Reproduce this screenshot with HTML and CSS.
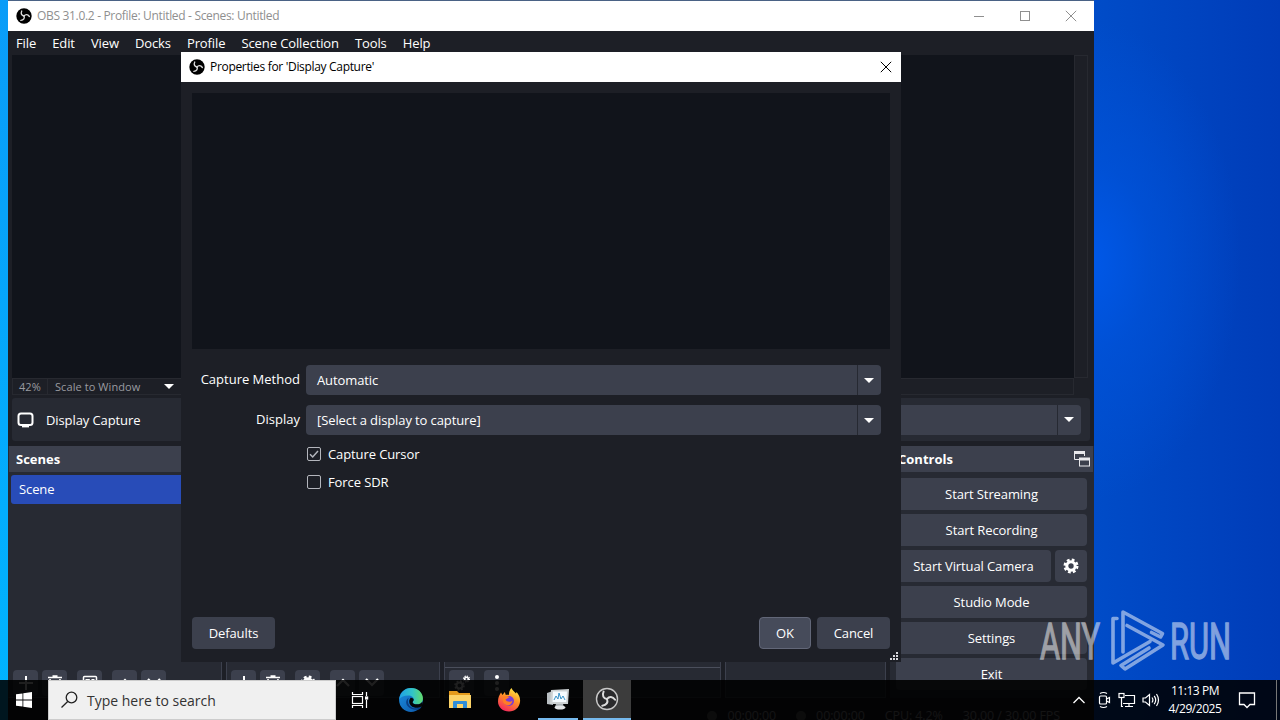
FILE: index.html
```html
<!DOCTYPE html>
<html lang="en">
<head>
    <meta charset="UTF-8">
    <meta name="viewport" content="width=device-width, initial-scale=1.0">
    <title>OBS 31.0.2</title>
    <link rel="stylesheet" href="styles.css">
</head>
<body>
    <!-- Shared icons -->
    <svg class="defs" width="0" height="0">
        <symbol id="obs" viewBox="0 0 24 24">
            <circle cx="12" cy="12" r="11.5" fill="#000"/>
            <g id="blades" fill="none" stroke="#dcdcdc" stroke-width="2" stroke-linecap="round">
                <path id="blade" d="M12 12C8.500 11.500 6.800 8.500 8.600 4.600"/>
                <use href="#blade" transform="rotate(120 12 12)"/>
                <use href="#blade" transform="rotate(240 12 12)"/>
            </g>
        </symbol>
        <symbol id="gear" viewBox="0 0 16 16">
            <circle cx="8" cy="8" r="4.200" fill="none" stroke="#fff" stroke-width="3"/>
            <circle cx="8" cy="8" r="6.200" fill="none" stroke="#fff" stroke-width="2.600" stroke-dasharray="2.700 2.170"/>
        </symbol>
        <symbol id="plus" viewBox="0 0 16 16"><path d="M8 1v14M1 8h14" stroke="#fff" stroke-width="2"/></symbol>
        <symbol id="trash" viewBox="0 0 16 16">
            <path d="M1 2.500h14M5.500 1h5M3 4l1 11h8l1-11M6 5v8M8 5v8M10 5v8" fill="none" stroke="#fff" stroke-width="1.600"/>
        </symbol>
        <symbol id="filter" viewBox="0 0 16 16">
            <rect x="1.500" y="1.500" width="13" height="12" rx="1" fill="none" stroke="#fff" stroke-width="1.500"/>
            <path d="M3.500 4h4l5 7h-9z" fill="#fff"/><path d="M9 4h3.500v4z" fill="#fff"/>
        </symbol>
        <symbol id="up" viewBox="0 0 16 16"><path d="M2 11l6-6 6 6" fill="none" stroke="#fff" stroke-width="2.200"/></symbol>
        <symbol id="down" viewBox="0 0 16 16"><path d="M2 4l6 6 6-6" fill="none" stroke="#fff" stroke-width="2.200"/></symbol>
        <symbol id="close" viewBox="0 0 12 12"><path d="M.8.8l10.400 10.400M11.200.8L.8 11.200" stroke="currentColor" stroke-width="1"/></symbol>
    </svg>

    <div class="window main-window">
        <header class="titlebar inactive">
            <svg class="app-icon"><use href="#obs"/></svg>
            <span class="title">OBS 31.0.2 - Profile: Untitled - Scenes: Untitled</span>
            <div class="window-buttons">
                <svg width="12" height="12"><path d="M1 6.500h10" stroke="currentColor"/></svg>
                <svg width="12" height="12"><rect x="1.500" y="1.500" width="9" height="9" fill="none" stroke="currentColor"/></svg>
                <svg width="12" height="12"><use href="#close"/></svg>
            </div>
        </header>
        <nav class="menubar">
            <span>File</span><span>Edit</span><span>View</span><span>Docks</span><span>Profile</span><span>Scene Collection</span><span>Tools</span><span>Help</span>
        </nav>
        <div class="preview-row">
            <div class="preview"></div>
            <div class="scroll-v"></div>
        </div>
        <div class="zoom-row">
            <span class="zoom-value">42%</span>
            <span class="zoom-mode">Scale to Window</span>
            <i class="arrow"></i>
        </div>
        <div class="source-toolbar">
            <svg width="18" height="16"><rect x="1.500" y="1.500" width="14" height="11.500" rx="2.500" fill="none" stroke="#fff" stroke-width="2"/><path d="M5 14.600h7" stroke="#fff" stroke-width="1.600"/></svg>
            <span>Display Capture</span>
            <div class="combo"><span></span><b><i class="arrow"></i></b></div>
        </div>
        <div class="docks">
            <section class="dock scenes">
                <h2>Scenes</h2>
                <div class="dock-body">
                    <div class="scene-item">Scene</div>
                </div>
                <div class="dock-tools">
                    <b><svg><use href="#plus"/></svg></b>
                    <b><svg><use href="#trash"/></svg></b>
                    <b class="gap"><svg><use href="#filter"/></svg></b>
                    <b class="gap"><svg><use href="#up"/></svg></b>
                    <b><svg><use href="#down"/></svg></b>
                </div>
            </section>
            <section class="dock sources">
                <h2>Sources</h2>
                <div class="dock-body"></div>
                <div class="dock-tools">
                    <b><svg><use href="#plus"/></svg></b>
                    <b><svg><use href="#trash"/></svg></b>
                    <b class="gap"><svg><use href="#gear"/></svg></b>
                    <b class="gap"><svg><use href="#up"/></svg></b>
                    <b><svg><use href="#down"/></svg></b>
                </div>
            </section>
            <section class="dock mixer">
                <h2>Audio Mixer</h2>
                <div class="dock-body"></div>
                <div class="dock-tools">
                    <b><svg viewBox="0 0 16 16"><g fill="none" stroke="#fff"><circle cx="5.500" cy="10.500" r="3" stroke-width="2"/><circle cx="5.500" cy="10.500" r="4.500" stroke-width="1.500" stroke-dasharray="1.800 1.730"/><circle cx="12.500" cy="4" r="1.800" stroke-width="1.600"/><circle cx="12.500" cy="4" r="3" stroke-width="1.200" stroke-dasharray="1.300 1.050"/></g></svg></b>
                    <b class="gap"><svg viewBox="0 0 16 16" fill="#fff"><circle cx="8" cy="2" r="2"/><circle cx="8" cy="8" r="2"/><circle cx="8" cy="14" r="2"/></svg></b>
                </div>
            </section>
            <section class="dock transitions">
                <h2>Scene Transitions</h2>
                <div class="dock-body"></div>
            </section>
            <section class="dock controls">
                <h2>Controls
                    <svg width="17" height="18"><g fill="none" stroke="#e8e8ec"><path d="M6 9.500H1.500v-8h10V6"/><path d="M1 2.500h11" stroke-width="3"/><rect x="6.500" y="8.500" width="10" height="7.500"/><path d="M6 9h11" stroke-width="3"/></g></svg>
                </h2>
                <div class="control-list">
                    <div class="btn">Start Streaming</div>
                    <div class="btn">Start Recording</div>
                    <div class="split">
                        <div class="btn">Start Virtual Camera</div>
                        <div class="btn gear"><svg width="16" height="16"><use href="#gear"/></svg></div>
                    </div>
                    <div class="btn">Studio Mode</div>
                    <div class="btn">Settings</div>
                    <div class="btn">Exit</div>
                </div>
            </section>
        </div>
        <div class="statusbar">
            <i></i><span class="stream">00:00:00</span><i></i><span>00:00:00</span><span>CPU: 4.2%</span><span>30.00 / 30.00 FPS</span>
        </div>
    </div>

    <div class="window dialog">
        <header class="titlebar">
            <svg class="app-icon"><use href="#obs"/></svg>
            <span class="title">Properties for 'Display Capture'</span>
            <div class="window-buttons">
                <svg width="12" height="12"><use href="#close"/></svg>
            </div>
        </header>
        <div class="dialog-body">
            <div class="source-preview"></div>
            <div class="form">
                <label>Capture Method</label>
                <div class="combo"><span>Automatic</span><b><i class="arrow"></i></b></div>
                <label>Display</label>
                <div class="combo"><span>[Select a display to capture]</span><b><i class="arrow"></i></b></div>
            </div>
            <div class="checks">
                <div class="check"><svg width="14" height="14"><rect x=".5" y=".5" width="13" height="13" rx="1.500"/><path d="M3 7.200l2.700 2.800L11 4"/></svg>Capture Cursor</div>
                <div class="check"><svg width="14" height="14"><rect x=".5" y=".5" width="13" height="13" rx="1.500"/></svg>Force SDR</div>
            </div>
            <div class="dialog-buttons">
                <div class="btn defaults">Defaults</div>
                <div class="btn ok">OK</div>
                <div class="btn cancel">Cancel</div>
            </div>
        </div>
        <svg class="grip" width="9" height="9" fill="#d8d8dc"><path d="M6 0h2v2H6zM3 3h2v2H3zM6 3h2v2H6zM0 6h2v2H0zM3 6h2v2H3zM6 6h2v2H6z"/></svg>
    </div>

    <svg class="watermark" width="200" height="70" viewBox="0 0 200 70">
        <g fill="#fff" stroke="#fff" stroke-width="1.300">
            <text x="5" y="54" textLength="60" lengthAdjust="spacingAndGlyphs">ANY</text>
            <text x="135" y="54" textLength="61" lengthAdjust="spacingAndGlyphs">RUN</text>
        </g>
        <path d="M88 47V7l39.500 21.500-2 3.500-9-4.500M82 13.500h-4V58l37-21.500M92 20.500L128 40 90 64l-4-3.500L114 43" fill="none" stroke="#fff" stroke-width="3.600" stroke-linejoin="round" stroke-linecap="round"/>
    </svg>

    <footer class="taskbar">
        <div class="start"><svg width="16" height="16" fill="#fff"><path d="M0 2.300l6.500-.9v6.200H0zM7.300 1.300L16 0v7.600H7.300zM0 8.400h6.500v6.200L0 13.700zM7.300 8.400H16V16l-8.700-1.200z"/></svg></div>
        <div class="search">
            <svg width="18" height="18" fill="none" stroke="#222" stroke-width="1.300"><circle cx="10.500" cy="6.500" r="5.300"/><path d="M6.700 10.500L.5 16.500"/></svg>
            <span>Type here to search</span>
        </div>
        <div class="task"><svg width="18" height="16" fill="none" stroke="#fff" stroke-width="1.200"><path d="M1.500 0v2.500h10V0M1.500 16v-2.500h10V16"/><rect x="1.500" y="4.500" width="10" height="7"/><path d="M15.500 0v4M15.500 8v8"/><rect x="14.600" y="5" width="2" height="2" fill="#fff"/></svg></div>
        <div class="task edge">
            <svg width="26" height="26" viewBox="0 0 24 24">
                <defs>
                    <linearGradient id="edge-top" x1="0" x2="1"><stop offset="0" stop-color="#1fa2e6"/><stop offset=".55" stop-color="#31c4c8"/><stop offset="1" stop-color="#63dc6a"/></linearGradient>
                    <linearGradient id="edge-low" x1="0" x2="1" y2="1"><stop offset="0" stop-color="#1b8fe0"/><stop offset="1" stop-color="#0c56a8"/></linearGradient>
                </defs>
                <circle cx="12" cy="12" r="11" fill="url(#edge-low)"/>
                <path d="M1.200 11C2 5 6.500 1 12 1c6.500 0 11 4.500 11 9.500 0 3.500-2.500 5.500-5.500 5.500-2.500 0-4-1-4-2 0-.6 1-1 1-2.500 0-2-2-3.700-5-3.700-4 0-7 1.500-8.300 3.200z" fill="url(#edge-top)"/>
                <path d="M10 10c-2 3-.5 8.500 4.500 9.500 3 .5 5.500-.5 7.500-1.800-.5 1-1.500 2.200-2.300 2.800-3 .9-7 .8-9.700-1.700C6.500 16 7 11.500 10 10z" fill="#0a3f86"/>
                <path d="M13.500 14c0 1 1.500 2 4 2 2.200 0 4-1 4.900-2.500.5 1.500.3 3-.5 4.200-5 3-10.900.8-11.500-3.700-.2-1.500.3-3 1.300-4 2 0 2.800 1 2.800 2 0 .8-1 1.300-1 2z" fill="#050708"/>
            </svg>
        </div>
        <div class="task">
            <svg width="22" height="20" viewBox="0 0 22 20"><path d="M0 1h8l2 2h11v5H0z" fill="#e59b1c"/><path d="M0 5h22v13H0z" fill="#fcd368"/><path d="M4 18v-6q0-1 1-1h12q1 0 1 1v6h-4v-4H8v4z" fill="#2f8dd8"/></svg>
        </div>
        <div class="task">
            <svg width="24" height="24" viewBox="0 0 24 24">
                <defs><linearGradient id="fox" x1=".8" x2=".3" y2="1"><stop offset="0" stop-color="#fff04a"/><stop offset=".45" stop-color="#ff9226"/><stop offset="1" stop-color="#f5265d"/></linearGradient></defs>
                <path d="M14.500 0c1 2.500 3 3.500 4.500 5.500l.6-1.500c2.500 3 3.900 6 3.400 10-.7 5.500-5 9.500-11 9.500S1 19.500 1 13.500C1 10 2 7.500 4 4.500L5.500 7l2.300-3 1 3c1-.2 2.200-.2 3 0 .2-2.500.7-5 2.700-7z" fill="url(#fox)"/>
                <circle cx="12" cy="13" r="5" fill="#7a3bd6"/>
                <path d="M6 9c2-1.500 5-1.500 6.500.5-2 .2-2.500 1.500-4 2 1 2.500 5 3 7 1-.5 4-3.500 5.500-6 4.500C6.500 16 5 12.500 6 9z" fill="#ff7d25"/>
            </svg>
        </div>
        <div class="task running">
            <svg width="24" height="22" viewBox="0 0 24 22"><path d="M1 5l6-2v14l-6-1z" fill="#b9bfc3"/><path d="M5 2l18-1-1 15H4z" fill="#cdd2d4"/><path d="M7 3.500h14l-.8 10.500H6.500z" fill="#f5fbff"/><path d="M8 12l2-4 2 3 1-6 2 6 2-3 2 4" fill="none" stroke="#3a93c9"/><path d="M10 16h7l1 3H9z" fill="#aab0b4"/><ellipse cx="14" cy="19.500" rx="5.500" ry="2" fill="#e2e5e7"/></svg>
        </div>
        <div class="task running active">
            <svg width="24" height="24" viewBox="0 0 24 24"><circle cx="12" cy="12" r="10.500" fill="#2a2a2c" stroke="#c8c8c8" stroke-width="1.400"/><use href="#blades"/></svg>
        </div>
        <div class="tray">
            <svg class="chevron" width="14" height="16"><path d="M1.500 11L7 5.500l5.500 5.500" fill="none" stroke="#fff" stroke-width="1.300"/></svg>
            <svg width="14" height="18" fill="none" stroke="#fff" stroke-width="1.200"><rect x="1.500" y="5" width="7" height="8" rx="1"/><path d="M8.500 8l3-1.500v5l-3-1.500M2 2.500q3.500-2 7 0M2 15.500q3.500 2 7 0"/></svg>
            <svg width="18" height="16" fill="none" stroke="#fff" stroke-width="1.200"><path d="M7 3.500h9.500v8H5M11 11.500v3M7 14.500h8M3.500 6v8.500H5"/><rect x="1" y="1.500" width="5" height="4"/></svg>
            <svg width="18" height="16" fill="none" stroke="#fff" stroke-width="1.200"><path d="M1 6v4h2.500l4 3.500v-11L3.500 6zM10 5.500q1.800 2.500 0 5M12.200 3.800q3 4.200 0 8.400M14.500 2q4 6 0 12"/></svg>
            <div class="clock"><span>11:13 PM</span><span>4/29/2025</span></div>
            <svg class="notify" width="18" height="18"><path d="M1.500 2h15v11.500H12L9 16.500l-3-3H1.500z" fill="none" stroke="#fff" stroke-width="1.300"/></svg>
            <i class="show-desktop"></i>
        </div>
    </footer>
</body>
</html>
```

FILE: styles.css
```css
* {
    box-sizing: border-box;
}

body {
    margin: 0;
    width: 1280px;
    height: 720px;
    overflow: hidden;
    position: relative;
    font-family: 'Open Sans', 'Noto Sans', sans-serif;
    font-size: 13px;
    letter-spacing: -0.1px;
    color: #fff;
    background:
        linear-gradient(180deg, #0a9cf8, #00b4ff) 0 0 / 8px 720px no-repeat,
        radial-gradient(ellipse 150px 240px at 1090px 260px, #0058e8 0%, rgba(0, 84, 222, 0.6) 40%, rgba(0, 72, 200, 0) 100%),
        linear-gradient(90deg, #004cc8 1094px, #003cb8 1280px);
}

.defs {
    position: absolute;
}

svg {
    flex: none;
    display: block;
}

.window {
    position: absolute;
    display: flex;
    flex-direction: column;
    background: #1d1f26;
}

.main-window {
    left: 8px;
    top: 0;
    width: 1086px;
    height: 740px;
    border-top: 1px solid #4a6285;
}

.titlebar {
    height: 30px;
    flex: none;
    display: flex;
    align-items: center;
    padding: 0 9px 0 8px;
    background: #fff;
    color: #000;
    font-size: 12px;
}

.inactive {
    color: #8f8f8f;
}

.app-icon {
    width: 16px;
    height: 16px;
    margin-right: 5px;
}

.title {
    letter-spacing: -0.32px;
    padding-bottom: 1px;
}

.window-buttons {
    margin-left: auto;
    display: flex;
    gap: 34px;
}

.main-window .titlebar {
    padding-right: 17px;
}

.dialog .titlebar {
    padding-bottom: 1px;
}

.menubar {
    height: 24px;
    flex: none;
    display: flex;
    align-items: center;
    padding-left: 8px;
    gap: 16px;
}

.preview-row {
    display: flex;
    height: 323px;
    padding-left: 4px;
}

.preview {
    width: 1062px;
    background: #11141b;
}

.scroll-v {
    width: 14px;
    border: 1px solid #272930;
}

.zoom-row {
    display: flex;
    align-items: center;
    height: 17px;
    width: 1062px;
    margin-left: 4px;
    border: 1px solid #272930;
    color: #9a9ba0;
    font-size: 11px;
    letter-spacing: 0.08px;
}

.zoom-value {
    width: 35px;
    padding-left: 6px;
    border-right: 1px solid #272930;
}

.zoom-mode {
    width: 116px;
    padding-left: 7px;
}

.arrow {
    width: 0;
    height: 0;
    border: 5px solid transparent;
    border-top-color: #fff;
    border-bottom: 0;
}

.source-toolbar {
    display: flex;
    align-items: center;
    height: 43px;
    flex: none;
    margin: 3px 4px 5px;
    padding: 0 9px 0 5px;
    background: #272a33;
    border-radius: 3px;
}

.source-toolbar > span {
    margin-left: 11px;
}

.source-toolbar .combo {
    width: 400px;
    margin-left: auto;
}

.combo {
    display: flex;
    height: 30px;
    align-items: stretch;
    background: #3c404d;
    border-radius: 4px;
    line-height: 30px;
}

.combo span {
    flex: 1;
    padding-left: 11px;
}

.combo b {
    width: 24px;
    padding-right: 1px;
    display: flex;
    align-items: center;
    justify-content: center;
    border-left: 1px solid #262932;
}

.docks {
    display: flex;
    gap: 4px;
    height: 252px;
    flex: none;
}

.dock {
    display: flex;
    flex-direction: column;
    background: #272a33;
    border: 1px solid #3c404d;
    border-top: 0;
}

.dock h2 {
    display: flex;
    align-items: center;
    height: 26px;
    flex: none;
    margin: 0;
    padding: 0 3px 0 7px;
    background: #3c404d;
    font-size: 13px;
    font-weight: 700;
    letter-spacing: 0;
}

.dock h2 svg {
    margin-left: auto;
}

.scenes,
.sources {
    width: 214px;
}

.scenes {
    border-left-color: #272a33;
}

.mixer {
    width: 277px;
}

.transitions {
    width: 161px;
}

.controls {
    width: 204px;
    border-color: #272a33;
}

.dock-body {
    height: 196px;
    padding: 3px 2px 0;
    flex: none;
}

.mixer .dock-body {
    border-bottom: 1px solid #4a4e5b;
}

.scene-item {
    height: 29px;
    line-height: 28px;
    padding-left: 8px;
    background: #284cb8;
    border-radius: 3px;
}

.dock-tools {
    display: flex;
    gap: 4px;
    padding: 2px 4px;
}

.dock-tools b {
    width: 25px;
    height: 26px;
    display: flex;
    align-items: center;
    justify-content: center;
    background: #3c404d;
    border-radius: 4px;
}

.dock-tools .gap {
    margin-left: 6px;
}

.dock-tools svg {
    width: 16px;
    height: 16px;
}

.control-list {
    display: flex;
    flex-direction: column;
    gap: 4px;
    padding: 6px 6px 0 5px;
}

.btn {
    height: 32px;
    flex: none;
    display: flex;
    align-items: center;
    justify-content: center;
    background: #3c404d;
    border-radius: 4px;
}

.split {
    display: flex;
    gap: 4px;
}

.split .btn {
    flex: 1;
}

.split .gear {
    flex: none;
    width: 32px;
}

.statusbar {
    display: flex;
    align-items: center;
    justify-content: flex-end;
    gap: 20px;
    padding: 9px 34px 0 0;
    font-size: 12.5px;
    color: #a0a0a4;
}

.statusbar i {
    width: 10px;
    height: 10px;
    margin-right: -10px;
    border-radius: 5px;
    background: #666;
}

/* Properties dialog */
.dialog {
    left: 181px;
    top: 52px;
    width: 720px;
    height: 610px;
}

.dialog-body {
    flex: 1;
    display: flex;
    flex-direction: column;
    padding: 11px 11px 13px;
}

.source-preview {
    height: 256px;
    background: #11141b;
}

.form {
    display: grid;
    grid-template-columns: 108px 575px;
    gap: 10px 6px;
    margin-top: 16px;
}

.form label {
    text-align: right;
    line-height: 29px;
    letter-spacing: 0;
}

.checks {
    margin: 10px 0 0 115px;
}

.check {
    display: flex;
    align-items: center;
    gap: 7px;
    height: 18px;
    margin-bottom: 10px;
}

.check svg {
    fill: none;
    stroke: #b4b6bd;
}

.check path {
    stroke-width: 1.5;
}

.dialog-buttons {
    display: flex;
    gap: 6px;
    margin-top: auto;
}

.defaults {
    width: 83px;
    margin-right: auto;
}

.ok {
    width: 52px;
    background: #464b5a;
    border: 1px solid #626778;
}

.cancel {
    width: 73px;
}

.grip {
    position: absolute;
    right: 2px;
    bottom: 1px;
}

.watermark {
    position: absolute;
    left: 1035px;
    top: 605px;
    opacity: 0.5;
    font-family: Roboto, sans-serif;
    font-weight: 400;
    font-size: 50px;
    letter-spacing: 0;
}

/* Taskbar */
.taskbar {
    position: absolute;
    left: 0;
    top: 680px;
    width: 1280px;
    height: 40px;
    display: flex;
    background: rgba(0, 0, 0, 0.88);
}

.start {
    width: 48px;
    display: flex;
    align-items: center;
    justify-content: center;
}

.search {
    width: 288px;
    display: flex;
    align-items: center;
    gap: 8px;
    padding-left: 12px;
    background: #f0f0f0;
    border: 1px solid #ccc;
    color: #333;
    font-size: 14px;
    letter-spacing: 0;
}

.task {
    width: 48px;
    margin-right: 1px;
    display: flex;
    align-items: center;
    justify-content: center;
}

.edge {
    margin-left: 2px;
}

.running {
    border-bottom: 2px solid #76b9ed;
    width: 40px;
    margin: 0 5px 0 4px;
}

.active {
    width: 48px;
    margin: 0;
    background: #3c3c3c;
}

.tray {
    margin-left: auto;
    display: flex;
    align-items: center;
    gap: 6px;
    font-size: 12px;
}

.chevron {
    margin-right: 6px;
}

.clock {
    width: 70px;
    margin-left: -6px;
    display: flex;
    flex-direction: column;
    align-items: center;
    line-height: 18px;
    letter-spacing: -0.45px;
}

.notify {
    margin-left: 2px;
}

.show-desktop {
    width: 4px;
    height: 40px;
    margin-left: 14px;
    border-left: 1px solid #777;
}
```
